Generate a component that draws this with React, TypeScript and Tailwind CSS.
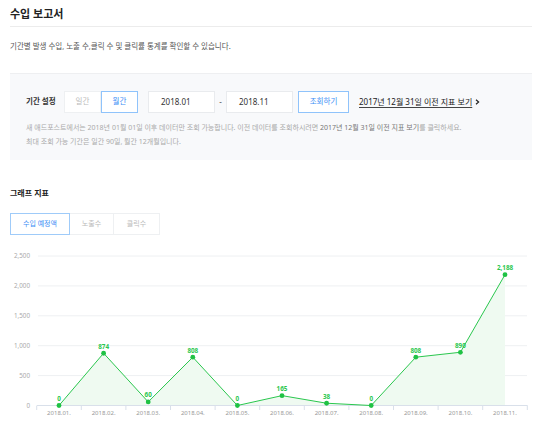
import React from "react";

const values = [0, 874, 60, 808, 0, 165, 38, 0, 808, 890, 2188];
const labels = ["0", "874", "60", "808", "0", "165", "38", "0", "808", "890", "2,188"];
const months = ["2018.01.", "2018.02.", "2018.03.", "2018.04.", "2018.05.", "2018.06.", "2018.07.", "2018.08.", "2018.09.", "2018.10.", "2018.11."];

const X0 = 36.7;
const STEP = 44.6;
const Y0 = 159.5;
const px = (i: number) => X0 + STEP / 2 + i * STEP;
const py = (v: number) => Y0 - (v / 2500) * 149.5;

function Chart() {
  const pts = values.map((v, i) => `${px(i)},${py(v)}`).join(" ");
  const area = `${px(0)},${Y0} ${pts} ${px(values.length - 1)},${Y0}`;
  const grid = [2500, 2000, 1500, 1000, 500];
  return (
    <svg width="538" height="200" viewBox="0 0 538 200" className="block">
      {grid.map((g) => (
        <line key={g} x1="38" x2="527" y1={py(g)} y2={py(g)} stroke="#eef0f2" strokeWidth="1" />
      ))}
      {[2500, 2000, 1500, 1000, 500, 0].map((g) => (
        <text key={g} x="30" y={py(g) + 2.2} textAnchor="end" fontSize="6.3" fill="#aaa">
          {g.toLocaleString("en-US")}
        </text>
      ))}
      <polygon points={area} fill="#effaf1" />
      <line x1="37" x2="527.5" y1={Y0} y2={Y0} stroke="#d9e0ea" strokeWidth="1" />
      {Array.from({ length: 12 }).map((_, i) => (
        <line key={i} x1={X0 + i * STEP} x2={X0 + i * STEP} y1={Y0} y2={Y0 + 4.5} stroke="#d9e0ea" strokeWidth="1" />
      ))}
      {months.map((m, i) => (
        <text key={m} x={px(i)} y={Y0 + 9.5} textAnchor="middle" fontSize="6" fill="#999">
          {m}
        </text>
      ))}
      <polyline points={pts} fill="none" stroke="#2ac74e" strokeWidth="1" />
      {values.map((v, i) => (
        <circle key={i} cx={px(i)} cy={py(v)} r="2.4" fill="#1fc244" />
      ))}
      {values.map((v, i) => (
        <text key={i} x={px(i)} y={py(v) - 4.5} textAnchor="middle" fontSize="6.3" fontWeight="700" fill="#2ac74e">
          {labels[i]}
        </text>
      ))}
    </svg>
  );
}

export default function App() {
  return (
    <div
      className="w-[538px] h-[445px] overflow-hidden bg-white text-[#333]"
      style={{ fontFamily: '"Noto Sans", "Noto Sans CJK KR", sans-serif' }}
    >
      <div className="ml-[10px] mr-[6px]">
        <div className="h-[27px] flex items-center border-b border-[#ececec]">
          <h1 className="text-[11px] font-bold text-[#222] leading-none">수입 보고서</h1>
        </div>
        <p className="mt-[14px] text-[7.5px] leading-[11px] text-[#555]">
          기간별 발생 수입, 노출 수,클릭 수 및 클릭률 통계를 확인할 수 있습니다.
        </p>
        <div className="mt-[21px] bg-[#f8f9fb] border-t border-[#eeeff1] pt-[17px] pb-[11px] pl-[16px]">
          <div className="flex items-center h-[22px]">
            <span className="text-[7.5px] font-bold text-[#333] w-[38px]">기간 설정</span>
            <div className="flex h-[22px]">
              <div className="w-[37px] flex items-center justify-center bg-white border border-[#eef0f2] text-[7.5px] text-[#bbb]">
                일간
              </div>
              <div className="w-[37px] flex items-center justify-center bg-white border border-[#8fc3fb] text-[7.5px] text-[#3d8ef5]">
                월간
              </div>
            </div>
            <div className="ml-[10px] w-[67px] h-[22px] flex items-center pl-[12px] bg-white border border-[#e9ebee] text-[8px] text-[#333]">
              2018.01
            </div>
            <span className="w-[11px] text-center text-[8px] text-[#555]">-</span>
            <div className="w-[67px] h-[22px] flex items-center pl-[12px] bg-white border border-[#e9ebee] text-[8px] text-[#333]">
              2018.11
            </div>
            <div className="ml-[5px] w-[51px] h-[22px] flex items-center justify-center bg-white border border-[#8fc3fb] text-[7.5px] text-[#3d8ef5]">
              조회하기
            </div>
            <span className="ml-[10px] text-[8px] text-[#222] underline underline-offset-2 decoration-[#444]">
              2017년 12월 31일 이전 지표 보기
            </span>
            <svg width="5" height="6" viewBox="0 0 5 6" className="ml-[3px]">
              <path d="M1 0.8 L3.6 3 L1 5.2" fill="none" stroke="#222" strokeWidth="1.2" />
            </svg>
          </div>
          <div className="mt-[8px] text-[7px] leading-[14px] text-[#aaa]">
            <p>
              새 애드포스트에서는 2018년 01월 01일 이후 데이터만 조회 가능합니다. 이전 데이터를 조회하시려면{" "}
              <span className="text-[#777]">2017년 12월 31일 이전 지표 보기</span>를 클릭하세요.
            </p>
            <p>최대 조회 가능 기간은 일간 90일, 월간 12개월입니다.</p>
          </div>
        </div>
        <h2 className="mt-[27px] text-[8px] leading-[12px] font-bold text-[#222]">그래프 지표</h2>
        <div className="mt-[14px] flex h-[22px]">
          <div className="w-[60px] flex items-center justify-center border border-[#9fcbf9] text-[7px] text-[#3d8ef5]">
            수입 예정액
          </div>
          <div className="w-[44px] flex items-center justify-center border border-[#eef0f2] border-l-0 text-[7px] text-[#bbb]">
            노출수
          </div>
          <div className="w-[46px] flex items-center justify-center border border-[#eef0f2] border-l-0 text-[7px] text-[#bbb]">
            클릭수
          </div>
        </div>
      </div>
      <div className="mt-[11px]">
        <Chart />
      </div>
    </div>
  );
}
